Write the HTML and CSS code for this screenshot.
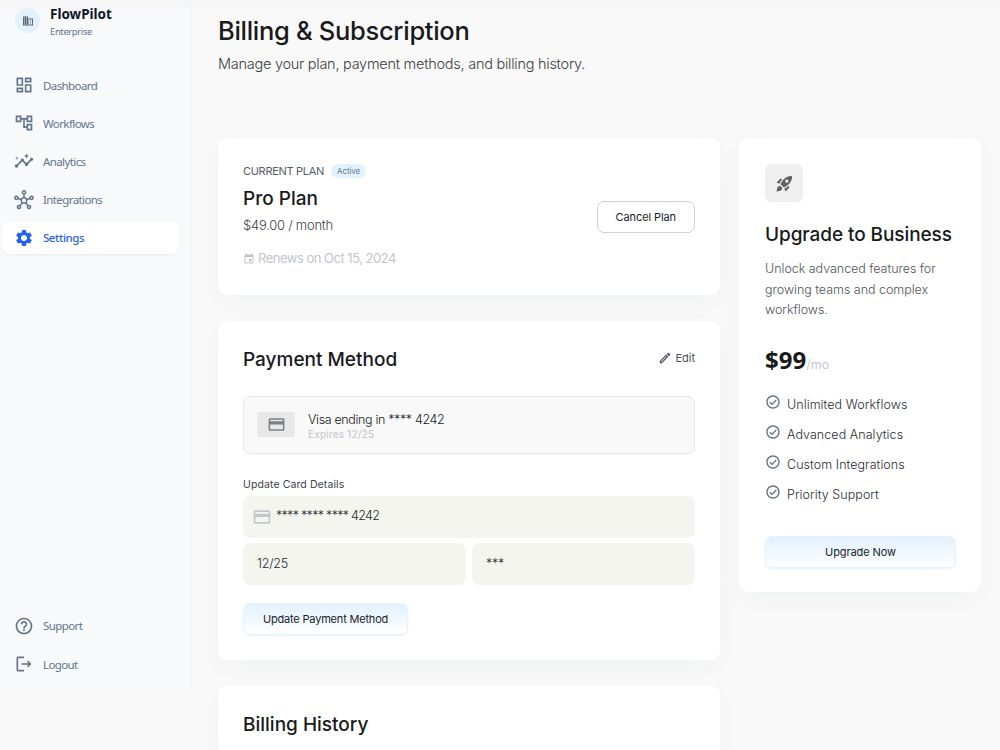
FILE: index.html
```html
<!DOCTYPE html>
<html lang="en">
  <head>
    <meta charset="UTF-8" />
    <meta name="viewport" content="width=device-width, initial-scale=1.0" />
    <title>Billing &amp; Subscription</title>
    <link rel="stylesheet" href="styles.css" />
  </head>
  <body>
    <div class="app">
      <aside class="sidebar">
        <div class="brand">
          <div class="brand-logo">
            <svg class="icon" viewBox="0 0 24 24"><path d="M12 7V3H2v18h20V7H12zM6 19H4v-2h2v2zm0-4H4v-2h2v2zm0-4H4V9h2v2zm0-4H4V5h2v2zm4 12H8v-2h2v2zm0-4H8v-2h2v2zm0-4H8V9h2v2zm0-4H8V5h2v2zm10 12h-8v-2h2v-2h-2v-2h2v-2h-2V9h8v10zm-2-8h-2v2h2v-2zm0 4h-2v2h2v-2z" /></svg>
          </div>
          <div>
            <div class="brand-name">FlowPilot</div>
            <div class="brand-tier">Enterprise</div>
          </div>
        </div>
        <nav class="nav">
          <a class="nav-item">
            <svg class="icon" viewBox="0 0 24 24"><path d="M19 5v2h-4V5h4M9 5v6H5V5h4m10 8v6h-4v-6h4M9 17v2H5v-2h4M21 3h-8v6h8V3zM11 3H3v10h8V3zm10 8h-8v10h8V11zm-10 4H3v6h8v-6z" /></svg>
            <span>Dashboard</span>
          </a>
          <a class="nav-item">
            <svg class="icon" viewBox="0 0 24 24"><path d="M22 11V3h-7v3H9V3H2v8h7V8h2v10h4v3h7v-8h-7v3h-2V8h2v3h7zM7 9H4V5h3v4zm10 6h3v4h-3v-4zm0-10h3v4h-3V5z" /></svg>
            <span>Workflows</span>
          </a>
          <a class="nav-item">
            <svg class="icon" viewBox="0 0 24 24"><path d="M21 8c-1.45 0-2.26 1.44-1.93 2.51l-3.55 3.56c-.3-.09-.74-.09-1.04 0l-2.55-2.55C12.27 10.45 11.46 9 10 9c-1.45 0-2.27 1.44-1.93 2.52l-4.56 4.55C2.44 15.74 1 16.55 1 18c0 1.1.9 2 2 2 1.45 0 2.26-1.44 1.93-2.51l4.55-4.56c.3.09.74.09 1.04 0l2.55 2.55C12.73 16.55 13.54 18 15 18c1.45 0 2.27-1.44 1.93-2.52l3.56-3.55C21.56 12.26 23 11.45 23 10c0-1.1-.9-2-2-2zM15 9l.94-2.07L18 6l-2.06-.93L15 3l-.92 2.07L12 6l2.08.93zM3.5 11L4 9l2-.5L4 8l-.5-2L3 8l-2 .5L3 9z" /></svg>
            <span>Analytics</span>
          </a>
          <a class="nav-item">
            <svg class="icon icon-line" viewBox="0 0 24 24">
              <circle cx="12" cy="12.5" r="3.3" />
              <circle cx="12" cy="2.9" r="1.9" />
              <circle cx="2.9" cy="9.4" r="1.9" />
              <circle cx="21.1" cy="9.4" r="1.9" />
              <circle cx="6" cy="20.4" r="1.9" />
              <circle cx="18" cy="20.4" r="1.9" />
              <path d="M12 5v4M5 10.1l3.8 1.3M19 10.1l-3.8 1.3M7.3 19l2.6-3.6M16.7 19l-2.6-3.6" />
            </svg>
            <span>Integrations</span>
          </a>
          <a class="nav-item active">
            <svg class="icon" viewBox="0 0 24 24"><path d="M19.14 12.94c.04-.3.06-.61.06-.94 0-.32-.02-.64-.07-.94l2.03-1.58c.18-.14.23-.41.12-.61l-1.92-3.32c-.12-.22-.37-.29-.59-.22l-2.39.96c-.5-.38-1.03-.7-1.62-.94l-.36-2.54c-.04-.24-.24-.41-.48-.41h-3.84c-.24 0-.43.17-.47.41l-.36 2.54c-.59.24-1.13.57-1.62.94l-2.39-.96c-.22-.08-.47 0-.59.22L2.74 8.87c-.12.21-.08.47.12.61l2.03 1.58c-.05.3-.09.63-.09.94s.02.64.07.94l-2.03 1.58c-.18.14-.23.41-.12.61l1.92 3.32c.12.22.37.29.59.22l2.39-.96c.5.38 1.03.7 1.62.94l.36 2.54c.05.24.24.41.48.41h3.84c.24 0 .44-.17.47-.41l.36-2.54c.59-.24 1.13-.56 1.62-.94l2.39.96c.22.08.47 0 .59-.22l1.92-3.32c.12-.22.07-.47-.12-.61l-2.01-1.58zM12 15.6c-1.98 0-3.6-1.62-3.6-3.6s1.62-3.6 3.6-3.6 3.6 1.62 3.6 3.6-1.62 3.6-3.6 3.6z" /></svg>
            <span>Settings</span>
          </a>
        </nav>
        <div class="nav nav-bottom">
          <a class="nav-item">
            <svg class="icon" viewBox="0 0 24 24"><path d="M11 18h2v-2h-2v2zm1-16C6.48 2 2 6.48 2 12s4.48 10 10 10 10-4.48 10-10S17.52 2 12 2zm0 18c-4.41 0-8-3.59-8-8s3.59-8 8-8 8 3.59 8 8-3.59 8-8 8zm0-14c-2.21 0-4 1.79-4 4h2c0-1.1.9-2 2-2s2 .9 2 2c0 2-3 1.75-3 5h2c0-2.25 3-2.5 3-5 0-2.21-1.79-4-4-4z" /></svg>
            <span>Support</span>
          </a>
          <a class="nav-item">
            <svg class="icon" viewBox="0 0 24 24"><path d="M17 8l-1.41 1.41L17.17 11H9v2h8.17l-1.58 1.58L17 16l4-4zM5 5h7V3H5c-1.1 0-2 .9-2 2v14c0 1.1.9 2 2 2h7v-2H5V5z" /></svg>
            <span>Logout</span>
          </a>
        </div>
      </aside>

      <main class="main">
        <h1 class="page-title">Billing &amp; Subscription</h1>
        <p class="page-subtitle">Manage your plan, payment methods, and billing history.</p>

        <div class="columns">
          <div class="col-left">
            <section class="card plan">
              <div>
                <div class="plan-label">
                  <span>CURRENT PLAN</span>
                  <span class="badge">Active</span>
                </div>
                <h2 class="plan-name">Pro Plan</h2>
                <div class="plan-price">$49.00 / month</div>
                <div class="plan-renews">
                  <svg class="icon" viewBox="0 0 24 24"><path d="M17 12h-5v5h5v-5zM16 1v2H8V1H6v2H5c-1.11 0-1.99.9-1.99 2L3 19c0 1.1.89 2 2 2h14c1.1 0 2-.9 2-2V5c0-1.1-.9-2-2-2h-1V1h-2zm3 18H5V8h14v11z" /></svg>
                  <span>Renews on Oct 15, 2024</span>
                </div>
              </div>
              <button class="btn btn-outline">Cancel Plan</button>
            </section>

            <section class="card payment">
              <div class="card-head">
                <h2 class="card-title">Payment Method</h2>
                <a class="edit-link">
                  <svg class="icon" viewBox="0 0 24 24"><path d="M14.06 9.02l.92.92L5.92 19H5v-.92l9.06-9.06M17.66 3c-.25 0-.51.1-.7.29l-1.83 1.83 3.75 3.75 1.83-1.83c.39-.39.39-1.02 0-1.41l-2.34-2.34c-.2-.2-.45-.29-.71-.29zm-3.6 3.19L3 17.25V21h3.75L17.81 9.94l-3.75-3.75z" /></svg>
                  <span>Edit</span>
                </a>
              </div>
              <div class="saved-card">
                <div class="saved-card-icon">
                  <svg class="icon" viewBox="0 0 24 24"><path d="M20 4H4c-1.11 0-1.99.89-1.99 2L2 18c0 1.11.89 2 2 2h16c1.11 0 2-.89 2-2V6c0-1.11-.89-2-2-2zm0 14H4v-6h16v6zm0-10H4V6h16v2z" /></svg>
                </div>
                <div>
                  <div class="saved-card-name">Visa ending in **** 4242</div>
                  <div class="saved-card-exp">Expires 12/25</div>
                </div>
              </div>
              <div class="form-label">Update Card Details</div>
              <div class="field field-card">
                <svg class="icon" viewBox="0 0 24 24"><path d="M20 4H4c-1.11 0-1.99.89-1.99 2L2 18c0 1.11.89 2 2 2h16c1.11 0 2-.89 2-2V6c0-1.11-.89-2-2-2zm0 14H4v-6h16v6zm0-10H4V6h16v2z" /></svg>
                <span>**** **** **** 4242</span>
              </div>
              <div class="field-row">
                <div class="field">12/25</div>
                <div class="field">***</div>
              </div>
              <button class="btn btn-primary">Update Payment Method</button>
            </section>

            <section class="card history">
              <h2 class="card-title">Billing History</h2>
            </section>
          </div>

          <section class="card upgrade">
            <div class="upgrade-icon">
              <svg class="icon" viewBox="0 0 24 24"><path d="M9.19 6.35c-2.04 2.29-3.44 5.58-3.57 5.89L2 10.69l4.05-4.05c.47-.47 1.15-.68 1.81-.55l1.33.26zM11.17 17s3.74-1.55 5.89-3.7c5.4-5.4 4.5-9.62 4.21-10.57-.95-.3-5.17-1.19-10.57 4.21C8.55 9.09 7 12.83 7 12.83L11.17 17zm6.48-2.19c-2.29 2.04-5.58 3.44-5.89 3.57L13.31 22l4.05-4.05c.47-.47.68-1.15.55-1.81l-.26-1.33zM9 18c0 .83-.34 1.58-.88 2.12C6.94 21.3 2 22 2 22s.7-4.94 1.88-6.12C4.42 15.34 5.17 15 6 15c1.66 0 3 1.34 3 3zm4-9c0-1.1.9-2 2-2s2 .9 2 2-.9 2-2 2-2-.9-2-2z" /></svg>
            </div>
            <h2 class="upgrade-title">Upgrade to Business</h2>
            <p class="upgrade-text">Unlock advanced features for<br />growing teams and complex<br />workflows.</p>
            <div class="upgrade-price"><strong>$99</strong><span>/mo</span></div>
            <ul class="features">
              <li>
                <svg class="icon" viewBox="0 0 24 24"><path d="M12 2C6.48 2 2 6.48 2 12s4.48 10 10 10 10-4.48 10-10S17.52 2 12 2zm0 18c-4.41 0-8-3.59-8-8s3.59-8 8-8 8 3.59 8 8-3.59 8-8 8zm4.2-11.6L10.5 14.1l-2.4-2.4-1.4 1.4 3.8 3.8 7.1-7.1z" /></svg>
                <span>Unlimited Workflows</span>
              </li>
              <li>
                <svg class="icon" viewBox="0 0 24 24"><path d="M12 2C6.48 2 2 6.48 2 12s4.48 10 10 10 10-4.48 10-10S17.52 2 12 2zm0 18c-4.41 0-8-3.59-8-8s3.59-8 8-8 8 3.59 8 8-3.59 8-8 8zm4.2-11.6L10.5 14.1l-2.4-2.4-1.4 1.4 3.8 3.8 7.1-7.1z" /></svg>
                <span>Advanced Analytics</span>
              </li>
              <li>
                <svg class="icon" viewBox="0 0 24 24"><path d="M12 2C6.48 2 2 6.48 2 12s4.48 10 10 10 10-4.48 10-10S17.52 2 12 2zm0 18c-4.41 0-8-3.59-8-8s3.59-8 8-8 8 3.59 8 8-3.59 8-8 8zm4.2-11.6L10.5 14.1l-2.4-2.4-1.4 1.4 3.8 3.8 7.1-7.1z" /></svg>
                <span>Custom Integrations</span>
              </li>
              <li>
                <svg class="icon" viewBox="0 0 24 24"><path d="M12 2C6.48 2 2 6.48 2 12s4.48 10 10 10 10-4.48 10-10S17.52 2 12 2zm0 18c-4.41 0-8-3.59-8-8s3.59-8 8-8 8 3.59 8 8-3.59 8-8 8zm4.2-11.6L10.5 14.1l-2.4-2.4-1.4 1.4 3.8 3.8 7.1-7.1z" /></svg>
                <span>Priority Support</span>
              </li>
            </ul>
            <button class="btn btn-primary btn-block">Upgrade Now</button>
          </section>
        </div>
      </main>
    </div>
  </body>
</html>
```
FILE: styles.css
```css
* {
  box-sizing: border-box;
}

body {
  margin: 0;
  height: 750px;
  overflow: hidden;
  font-family: Inter, "Liberation Sans", sans-serif;
  color: #181a1b;
  background: linear-gradient(#f5f5f5, #f9f9f9 14px);
}

h1,
h2,
p,
ul {
  margin: 0;
  padding: 0;
  font-weight: 500;
}

.icon {
  display: block;
  flex: none;
  fill: currentColor;
}

.icon-line {
  fill: none;
  stroke: currentColor;
  stroke-width: 1.8;
}

.app {
  display: flex;
  align-items: flex-start;
}

/* sidebar */
.sidebar {
  width: 192px;
  height: 692px;
  padding: 7px 12px 0 2px;
  display: flex;
  flex-direction: column;
  font-family: "Noto Sans", sans-serif;
  color: #64748b;
  background: linear-gradient(rgba(245, 245, 245, 0.8), #f8f9fb 14px);
  border-right: 1px solid #f1f3f5;
}

.brand {
  display: flex;
  gap: 10px;
  padding-left: 13px;
}

.brand-logo {
  width: 25px;
  height: 25px;
  margin-top: 1px;
  border-radius: 50%;
  display: flex;
  align-items: center;
  justify-content: center;
  background: #e1f1fe;
  color: #5b6670;
}

.brand-logo .icon {
  width: 12px;
  height: 12px;
}

.brand-name {
  font-size: 13.5px;
  line-height: 15px;
  font-weight: 700;
  color: #0f172a;
}

.brand-tier {
  margin-top: 2px;
  font-size: 9.5px;
  line-height: 15px;
  letter-spacing: -0.4px;
}

.nav {
  display: flex;
  flex-direction: column;
  gap: 6.2px;
  margin-top: 30px;
}

.nav-item {
  height: 32px;
  display: flex;
  align-items: center;
  gap: 9px;
  padding-left: 12px;
  border-radius: 8px;
  font-size: 11.5px;
  letter-spacing: -0.6px;
}

.nav-item .icon {
  width: 20px;
  height: 20px;
}

.nav-item .icon-line {
  overflow: visible;
}

.nav-item.active {
  background: #fff;
  color: #2563eb;
  font-weight: 500;
  letter-spacing: -0.45px;
  box-shadow: 0 1px 2px rgba(15, 23, 42, 0.06);
}

.nav-bottom {
  margin-top: auto;
  padding: 12px 0 12px;
  border-top: 1px solid #f1f4f7;
}

/* content */
.main {
  padding: 14px 0 0 26px;
}

.page-title {
  font-size: 25.5px;
  line-height: 34px;
  letter-spacing: -0.3px;
}

.page-subtitle {
  margin-top: 6px;
  font-size: 14.5px;
  line-height: 20px;
  font-weight: 300;
  letter-spacing: -0.26px;
  color: #3c4044;
}

.columns {
  display: flex;
  align-items: flex-start;
  gap: 19px;
  margin-top: 64px;
}

.col-left {
  width: 502px;
  display: flex;
  flex-direction: column;
  gap: 26px;
}

.card {
  background: #fff;
  border-radius: 9px;
  padding: 25px;
  box-shadow: 0 8px 26px rgba(30, 50, 50, 0.035);
}

.card-title {
  padding-top: 1px;
  font-size: 19px;
  line-height: 26px;
}

.btn {
  height: 32px;
  padding: 0 18px;
  border-radius: 7px;
  font-family: inherit;
  font-size: 11px;
  font-weight: 400;
  letter-spacing: -0.1px;
  color: #16222c;
  white-space: nowrap;
}

.btn-outline {
  border: 1px solid #cfd0d1;
  background: #fff;
}

.btn-primary {
  border: 1px solid #e6f2fc;
  background: linear-gradient(#e2f1fe, #fff);
  box-shadow: 0 1px 2px rgba(180, 215, 245, 0.35);
}

.btn-block {
  width: 100%;
}

/* current plan */
.plan {
  height: 157px;
  display: flex;
  align-items: center;
  justify-content: space-between;
}

.plan-label {
  display: flex;
  align-items: center;
  gap: 7px;
  height: 16px;
  font-size: 11px;
  letter-spacing: -0.3px;
  color: #555c64;
}

.badge {
  height: 14px;
  padding: 0 6px;
  border-radius: 7px;
  background: #e2f1fe;
  color: #66788a;
  font-size: 8px;
  line-height: 14px;
  letter-spacing: -0.1px;
}

.plan-name {
  margin-top: 7px;
  font-size: 19px;
  line-height: 26px;
}

.plan-price {
  margin-top: 3px;
  font-size: 13px;
  line-height: 20px;
  font-weight: 300;
  letter-spacing: -0.25px;
  color: #3c4044;
}

.plan-renews {
  display: flex;
  align-items: center;
  gap: 3px;
  margin-top: 13px;
  padding-bottom: 2px;
  font-size: 13px;
  line-height: 20px;
  letter-spacing: -0.5px;
  color: #c2c5ca;
}

.plan-renews .icon {
  width: 12px;
  height: 12px;
  margin-top: 2px;
}

/* payment method */
.payment {
  height: 339px;
}

.card-head {
  display: flex;
  align-items: center;
  justify-content: space-between;
}

.edit-link {
  display: flex;
  align-items: center;
  gap: 3px;
  padding-bottom: 3px;
  font-size: 11px;
  color: #455260;
}

.edit-link .icon {
  width: 14px;
  height: 14px;
}

.saved-card {
  height: 58px;
  margin-top: 23px;
  padding: 0 13px;
  display: flex;
  align-items: center;
  gap: 13px;
  border: 1px solid #e6e7e8;
  border-radius: 7px;
  background: #f9f9f9;
}

.saved-card-icon {
  width: 38px;
  height: 25px;
  margin-bottom: 1px;
  border-radius: 3px;
  display: flex;
  align-items: center;
  justify-content: center;
  background: #e8e8e8;
  color: #7b8085;
}

.saved-card-icon .icon {
  width: 19px;
  height: 19px;
}

.saved-card-name {
  padding-top: 2px;
  font-size: 12.5px;
  line-height: 16px;
  font-weight: 350;
  letter-spacing: -0.35px;
}

.saved-card-exp {
  font-size: 10px;
  line-height: 13px;
  font-weight: 500;
  letter-spacing: 0.15px;
  color: #c8cbcf;
}

.form-label {
  margin-top: 23px;
  font-size: 10.5px;
  line-height: 16px;
  letter-spacing: 0.1px;
  color: #3d4349;
}

.field {
  height: 42px;
  padding: 0 14px 2px;
  display: flex;
  align-items: center;
  border-radius: 7px;
  background: #f4f5ee;
  font-size: 12.5px;
  font-weight: 350;
  letter-spacing: -0.2px;
  color: #25292d;
}

.field-card {
  margin-top: 3px;
  padding-left: 9px;
  padding-bottom: 3px;
  gap: 4px;
  letter-spacing: -0.7px;
}

.field-card .icon {
  width: 20px;
  height: 20px;
  margin-top: 2px;
  color: #c3c6cc;
}

.field-row {
  display: flex;
  gap: 6px;
  margin-top: 5px;
}

.field-row .field {
  flex: 1;
}

.payment .btn {
  margin-top: 18px;
  padding: 0 19px;
  letter-spacing: -0.19px;
}

/* only the top of this card is in view */
.history {
  height: 64px;
  padding-bottom: 0;
  border-radius: 9px 9px 0 0;
}

/* upgrade */
.upgrade {
  width: 242px;
  height: 454px;
  padding-left: 26px;
}

.upgrade-icon {
  width: 38px;
  height: 38px;
  margin-top: 1px;
  border-radius: 6px;
  display: flex;
  align-items: center;
  justify-content: center;
  background: #efefef;
  color: #5f6264;
}

.upgrade-icon .icon {
  width: 19px;
  height: 19px;
}

.upgrade-title {
  margin-top: 20px;
  font-size: 19px;
  line-height: 26px;
  letter-spacing: -0.08px;
  white-space: nowrap;
}

.upgrade-text {
  margin-top: 11px;
  font-size: 12.5px;
  line-height: 20.5px;
  font-weight: 350;
  letter-spacing: -0.03px;
  color: #505458;
  white-space: nowrap;
}

.upgrade-price {
  display: flex;
  align-items: baseline;
  margin-top: 22px;
  line-height: 34px;
}

.upgrade-price strong {
  font-family: "Noto Sans", sans-serif;
  font-size: 24px;
  font-weight: 700;
}

.upgrade-price span {
  font-size: 12.5px;
  color: #c5c8cb;
}

.features {
  list-style: none;
  margin-top: 9px;
}

.features li {
  height: 30px;
  display: flex;
  align-items: flex-start;
  gap: 6px;
  padding-top: 3px;
  font-size: 12.5px;
  line-height: 22px;
  font-weight: 350;
  letter-spacing: 0.06px;
  color: #282c30;
}

.features .icon {
  width: 16px;
  height: 16px;
  color: #60707c;
}

.upgrade .btn {
  margin-top: 25px;
}
```
